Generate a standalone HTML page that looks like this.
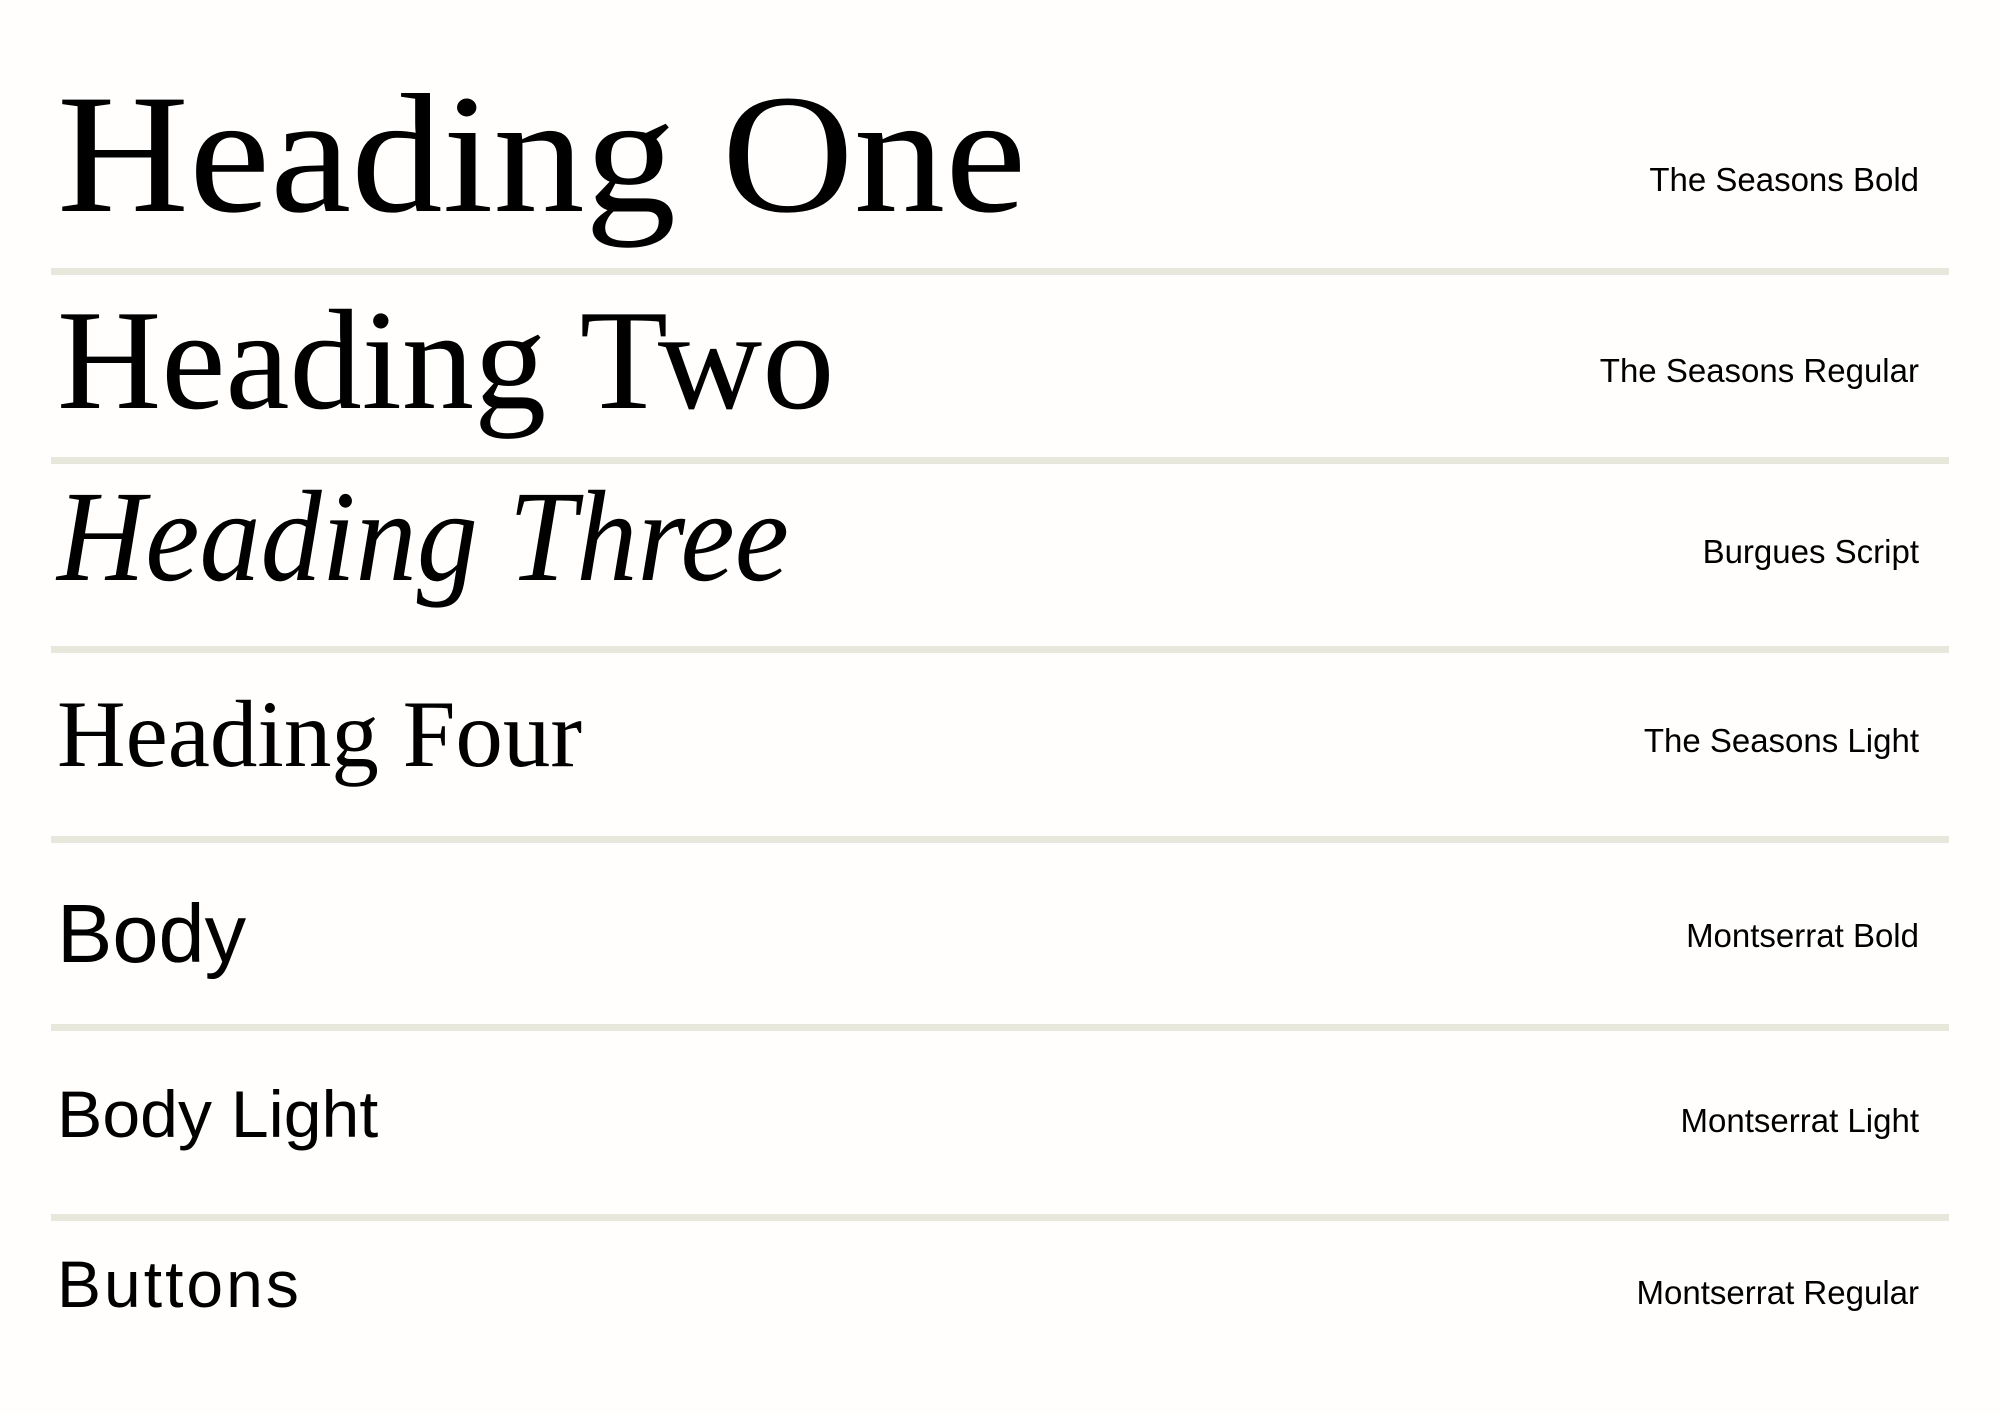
<!DOCTYPE html>
<html><head><meta charset="utf-8">
<style>
html,body{margin:0;padding:0;}
body{width:2000px;height:1414px;background:#fffefc;position:relative;overflow:hidden;color:#000;}
.t{position:absolute;left:57px;white-space:nowrap;line-height:1;transform-origin:0 0;}
.s{font-family:"Liberation Serif",serif;}
.a{font-family:"Liberation Sans",sans-serif;}
.l{position:absolute;right:81px;font-family:"Liberation Sans",sans-serif;font-size:33px;line-height:1;white-space:nowrap;}
.hr{position:absolute;left:51px;width:1898px;height:7px;background:#e8e7dc;}
</style></head><body>
<div class="t s" style="top:69px;font-size:170px;transform:scaleX(1.075);">Heading One</div>
<div class="t s" style="top:289px;font-size:143px;transform:scaleX(1.01);">Heading Two</div>
<div class="t s" style="top:472px;font-size:130px;font-style:italic;transform:scaleX(0.94);">Heading Three</div>
<div class="t s" style="top:687px;font-size:95px;">Heading Four</div>
<div class="t a" style="top:892px;font-size:83px;">Body</div>
<div class="t a" style="top:1081px;font-size:66px;transform:scaleX(1.03);">Body Light</div>
<div class="t a" style="top:1251px;font-size:66px;letter-spacing:3px;">Buttons</div>

<div class="l" style="top:163px;">The Seasons Bold</div>
<div class="l" style="top:354px;">The Seasons Regular</div>
<div class="l" style="top:535px;">Burgues Script</div>
<div class="l" style="top:724px;">The Seasons Light</div>
<div class="l" style="top:919px;">Montserrat Bold</div>
<div class="l" style="top:1104px;">Montserrat Light</div>
<div class="l" style="top:1276px;">Montserrat Regular</div>

<div class="hr" style="top:268px;"></div>
<div class="hr" style="top:457px;"></div>
<div class="hr" style="top:646px;"></div>
<div class="hr" style="top:836px;"></div>
<div class="hr" style="top:1024px;"></div>
<div class="hr" style="top:1214px;"></div>
</body></html>
